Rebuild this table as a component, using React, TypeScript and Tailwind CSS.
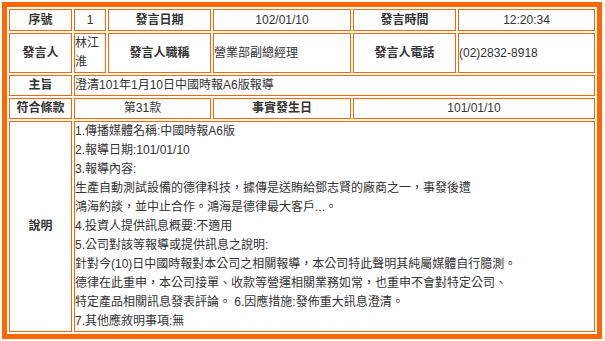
import React from 'react'

const th = 'border border-[#ff6600] text-center font-bold text-[#333] align-middle p-0'
const td = 'border border-[#ff6600] text-[#333] align-middle p-0'

const lines = [
  '1.傳播媒體名稱:中國時報A6版',
  '2.報導日期:101/01/10',
  '3.報導內容:',
  '生產自動測試設備的德律科技，據傳是送賄給鄧志賢的廠商之一，事發後遭',
  '鴻海約談，並中止合作。鴻海是德律最大客戶...。',
  '4.投資人提供訊息概要:不適用',
  '5.公司對該等報導或提供訊息之說明:',
  '針對今(10)日中國時報對本公司之相關報導，本公司特此聲明其純屬媒體自行臆測。',
  '德律在此重申，本公司接單、收款等營運相關業務如常，也重申不會對特定公司、',
  '特定產品相關訊息發表評論。 6.因應措施:發佈重大訊息澄清。',
  '7.其他應敘明事項:無',
]

export default function App() {
  return (
    <div
      className="bg-white w-[605px] h-[341px] pt-[2px] pl-[2px]"
      style={{ fontFamily: '"Liberation Sans", Arial, "Noto Sans CJK TC", sans-serif' }}
    >
      <div className="w-[600px] border-[5px] border-[#ff6600] bg-white">
        <table className="w-[590px] table-fixed border-separate border-spacing-[2px] text-[12px] leading-[19px]">
          <tbody>
            <tr>
              <td className={`${th} w-[63px] h-[22px]`}>序號</td>
              <td className={`${td} w-[32px] h-[22px] text-center`}>1</td>
              <td className={`${th} w-[103px] h-[22px]`}>發言日期</td>
              <td className={`${td} w-[138px] h-[22px] text-center`}>102/01/10</td>
              <td className={`${th} w-[103px] h-[22px]`}>發言時間</td>
              <td className={`${td} w-[137px] h-[22px] text-center`}>12:20:34</td>
            </tr>
            <tr>
              <td className={th}>發言人</td>
              <td className={td}>林江淮</td>
              <td className={th}>發言人職稱</td>
              <td className={td}>營業部副總經理</td>
              <td className={th}>發言人電話</td>
              <td className={td}>(02)2832-8918</td>
            </tr>
            <tr>
              <td className={th}>主旨</td>
              <td className={td} colSpan={5}>
                澄清101年1月10日中國時報A6版報導
              </td>
            </tr>
            <tr>
              <td className={th}>符合條款</td>
              <td className={`${td} text-center`} colSpan={2}>
                第31款
              </td>
              <td className={th}>事實發生日</td>
              <td className={`${td} text-center`} colSpan={2}>
                101/01/10
              </td>
            </tr>
            <tr>
              <td className={th}>說明</td>
              <td className={`${td} align-top`} colSpan={5}>
                {lines.map((l, i) => (
                  <div key={i} className="whitespace-pre">
                    {l}
                  </div>
                ))}
              </td>
            </tr>
          </tbody>
        </table>
      </div>
    </div>
  )
}
